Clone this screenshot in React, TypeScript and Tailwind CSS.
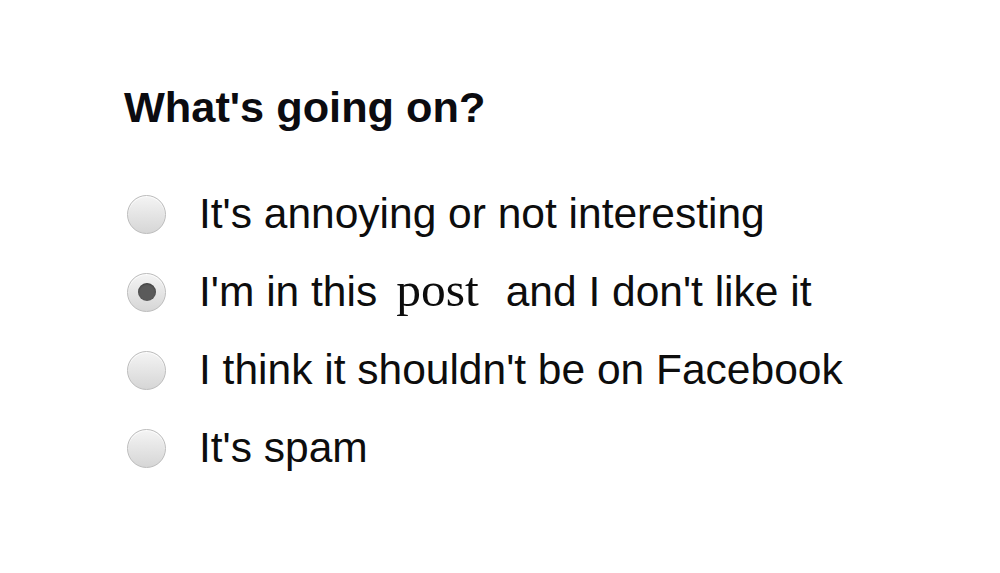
import React from 'react';

interface OptionProps {
  checked?: boolean;
  children: React.ReactNode;
}

const Radio: React.FC<{ checked?: boolean }> = ({ checked }) => {
  return (
    <div className="ml-[3px] w-[39px] h-[39px] shrink-0 rounded-full border border-[#bcbcbc] bg-gradient-to-b from-[#f4f4f4] to-[#d6d6d6] shadow-[inset_0_1px_1px_rgba(255,255,255,0.9)] flex items-center justify-center">
      {checked && (
        <div className="w-[18px] h-[18px] rounded-full bg-[#5a5a5a] shadow-[inset_0_1px_2px_rgba(0,0,0,0.35)]" />
      )}
    </div>
  );
};

const Option: React.FC<OptionProps> = ({ checked, children }) => {
  return (
    <label className="flex items-center h-[78px] gap-[33px]">
      <Radio checked={checked} />
      <span className="text-[42.5px] leading-none text-[#0d0d0d]">{children}</span>
    </label>
  );
};

export default function App() {
  return (
    <div className="w-[1000px] h-[573px] bg-white pl-[124px] pt-[86px] font-['Liberation_Sans',Arial,sans-serif]">
      <h1 className="text-[43.3px] leading-[43px] font-bold text-[#0b0b10]">What's going on?</h1>

      <div className="mt-[46px] flex flex-col">
        <Option>It's annoying or not interesting</Option>
        <Option checked>
          I'm in this
          <span className="ml-[19px] mr-[27px] font-['Liberation_Serif','Times_New_Roman',serif] text-[49.5px] leading-[36px]">
            post
          </span>
          and I don't like it
        </Option>
        <Option>I think it shouldn't be on Facebook</Option>
        <Option>It's spam</Option>
      </div>
    </div>
  );
}
